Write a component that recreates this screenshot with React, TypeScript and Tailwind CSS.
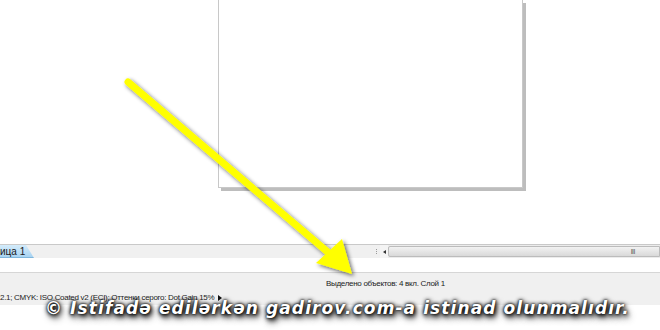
export default function App() {
  return (
    <div className="relative w-[660px] h-[330px] overflow-hidden bg-white font-['Liberation_Sans',Arial,sans-serif]">
      {/* canvas area */}
      <div className="h-[244px] bg-white">
        <div className="ml-[218px] w-[305px] h-[188px] bg-white border-l border-b border-r border-[#c8c8c8] shadow-[3px_3px_0_#bdbdbd]" />
      </div>

      {/* tabs + horizontal scrollbar */}
      <div className="flex h-[14px] border-t border-[#c9c9c9]">
        <div className="flex w-[372px] bg-[#f0f0f0]">
          <div className="relative h-[13px] w-[34px] bg-gradient-to-b from-[#d4ecfb] to-[#a8d3f1] border-b border-[#7fb6dc] [clip-path:polygon(0_0,26px_0,34px_100%,0_100%)] text-[10px] leading-[13px] text-[#1a1a1a]">
            ица 1
          </div>
        </div>
        <div className="w-[8px] bg-[#f0f0f0] flex flex-col items-center justify-center gap-[1px]">
          <span className="w-[1px] h-[1px] bg-[#9a9a9a]" />
          <span className="w-[1px] h-[1px] bg-[#9a9a9a]" />
          <span className="w-[1px] h-[1px] bg-[#9a9a9a]" />
        </div>
        <div className="w-[8px] bg-[#f4f4f4] flex items-center justify-center">
          <span className="w-0 h-0 border-y-[2px] border-y-transparent border-r-[3px] border-r-[#333]" />
        </div>
        <div className="flex-1 bg-[#ececec] py-[1px]">
          <div className="h-full rounded-l-[2px] border border-[#bcbcbc] bg-gradient-to-b from-[#f2f2f2] to-[#d9d9d9] flex items-center justify-end pr-[24px]">
            <span className="text-[7px] leading-none text-[#555] tracking-[-0.5px]">III</span>
          </div>
        </div>
      </div>

      <div className="h-[14px] bg-white" />

      {/* status bar */}
      <div className="h-[33px] bg-[#f0f0f0] border-t border-[#d6d6d6] text-[8px] tracking-[-0.3px] text-[#222]">
        <div className="pl-[326px] pt-[5px] leading-[11px]">Выделено объектов: 4 вкл. Слой 1</div>
        <div className="flex items-center gap-[4px] pt-[3px] leading-[11px]">
          <span>2.1; CMYK: ISO Coated v2 (ECI); Оттенки серого: Dot Gain 15%</span>
          <span className="w-0 h-0 border-y-[3px] border-y-transparent border-l-[4px] border-l-[#111]" />
        </div>
      </div>

      {/* yellow arrow */}
      <svg className="absolute left-0 top-0" width="660" height="330" viewBox="0 0 660 330">
        <defs>
          <filter id="sh" x="-20%" y="-20%" width="140%" height="140%">
            <feGaussianBlur in="SourceAlpha" stdDeviation="2" />
            <feOffset dx="2" dy="2" result="b" />
            <feComponentTransfer>
              <feFuncA type="linear" slope="0.6" />
            </feComponentTransfer>
            <feMerge>
              <feMergeNode />
              <feMergeNode in="SourceGraphic" />
            </feMerge>
          </filter>
        </defs>
        <g filter="url(#sh)">
          <line x1="128" y1="82" x2="330" y2="254" stroke="#ffff00" strokeWidth="7" strokeLinecap="round" />
          <polygon points="352,274 316,263 342,239" fill="#ffff00" />
        </g>
      </svg>

      {/* watermark */}
      <div className="absolute left-[45px] top-[297px] text-[17px] leading-[22px] font-bold italic tracking-[1.1px] text-white font-['DejaVu_Sans',Verdana,sans-serif] [text-shadow:0_0_2px_#000,0_0_4px_#000,1px_2px_5px_#000,2px_4px_7px_#333]">
        © Istifadə edilərkən gadirov.com-a istinad olunmalıdır.
      </div>
    </div>
  );
}
